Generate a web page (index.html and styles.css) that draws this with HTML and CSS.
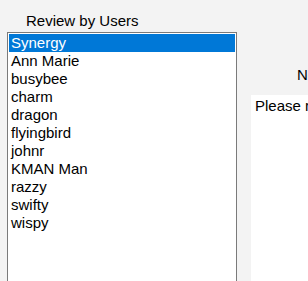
FILE: index.html
```html
<!DOCTYPE html>
<html lang="en">
<head>
  <meta charset="UTF-8" />
  <meta name="viewport" content="width=device-width, initial-scale=1.0" />
  <title>Review by Users</title>
  <link rel="stylesheet" href="styles.css">
</head>
<body>
  <div class="users">
    <h3>Review by Users</h3>
    <ul class="listbox">
      <li class="selected">Synergy</li>
      <li>Ann Marie</li>
      <li>busybee</li>
      <li>charm</li>
      <li>dragon</li>
      <li>flyingbird</li>
      <li>johnr</li>
      <li>KMAN Man</li>
      <li>razzy</li>
      <li>swifty</li>
      <li>wispy</li>
    </ul>
  </div>
  <div class="review">
    <h3>New Review</h3>
    <div class="review-box">Please rate this product</div>
  </div>
</body>
</html>
```

FILE: styles.css
```css
body {
  margin: 0;
  width: 308px;
  height: 281px;
  overflow: hidden;
  font-family: "Liberation Sans", Arial, sans-serif;
  font-size: 15px;
  color: #000000;
  background-color: #f3f3f3;
  display: flex;
}
h3 {
  margin: 0;
  font-size: 15px;
  font-weight: normal;
  line-height: 17px;
}
.users {
  flex-shrink: 0;
  margin-left: 7px;
}
.users h3 {
  margin-top: 12px;
  padding-left: 19px;
}
.listbox {
  list-style: none;
  margin: 3px 0 0;
  padding: 1px;
  width: 226px;
  height: 260px;
  background-color: #ffffff;
  border: 1px solid #7a7a7a;
}
.listbox li {
  height: 18px;
  line-height: 18px;
  padding-left: 2px;
  white-space: nowrap;
}
.listbox li.selected {
  background-color: #0078d7;
  color: #ffffff;
}
.review {
  flex-shrink: 0;
  width: 200px;
  margin-left: 14px;
}
.review h3 {
  margin-top: 66px;
  padding-left: 46px;
  white-space: nowrap;
}
.review-box {
  margin-top: 12px;
  height: 200px;
  padding: 2px 4px;
  line-height: 17px;
  background-color: #ffffff;
  white-space: nowrap;
}
```
